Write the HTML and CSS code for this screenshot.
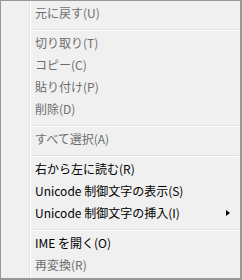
FILE: index.html
```html
<!DOCTYPE html>
<html lang="ja">
<head>
<meta charset="UTF-8">
<meta name="viewport" content="width=device-width, initial-scale=1.0">
<title>コンテキスト メニュー</title>
<link rel="stylesheet" href="styles.css">
</head>
<body>
  <div class="menu">
    <div class="item disabled">元に戻す(U)</div>
    <div class="sep"></div>
    <div class="item disabled">切り取り(T)</div>
    <div class="item disabled">コピー(C)</div>
    <div class="item disabled">貼り付け(P)</div>
    <div class="item disabled">削除(D)</div>
    <div class="sep"></div>
    <div class="item disabled">すべて選択(A)</div>
    <div class="sep"></div>
    <div class="item">右から左に読む(R)</div>
    <div class="item">Unicode 制御文字の表示(S)</div>
    <div class="item has-sub">Unicode 制御文字の挿入(I)<span class="arrow"></span></div>
    <div class="sep"></div>
    <div class="item">IME を開く(O)</div>
    <div class="item disabled">再変換(R)</div>
  </div>
</body>
</html>
```

FILE: styles.css
```css
body {
  margin: 0;
  padding: 0;
  background: #fff;
}
.menu {
  position: relative;
  box-sizing: border-box;
  width: 242px;
  height: 280px;
  padding: 1px 0 2px;
  background-color: #f0f0f0;
  border: 1px solid #979797;
  border-right-width: 2px;
  border-bottom-width: 2px;
  font-family: "Meiryo UI", "Noto Sans CJK JP", sans-serif;
  font-size: 12px;
  color: #000;
}
/* gutter line on the left */
.menu::before {
  content: "";
  position: absolute;
  top: 0;
  bottom: 0;
  left: 28px;
  width: 1px;
  background: #e2e3e3;
  border-right: 1px solid #fff;
}
.item {
  position: relative;
  height: 22px;
  line-height: 22px;
  padding-left: 34px;
  white-space: nowrap;
}
.disabled {
  color: #6d6d6d;
}
.sep {
  position: relative;
  height: 1px;
  margin: 5px 1px 1px 30px;
  background: #e0e0e0;
  border-bottom: 1px solid #fff;
}
.arrow {
  position: absolute;
  top: 8px;
  left: 225px;
  width: 0;
  height: 0;
  border-top: 3.5px solid transparent;
  border-bottom: 3.5px solid transparent;
  border-left: 4px solid #000;
}
```
